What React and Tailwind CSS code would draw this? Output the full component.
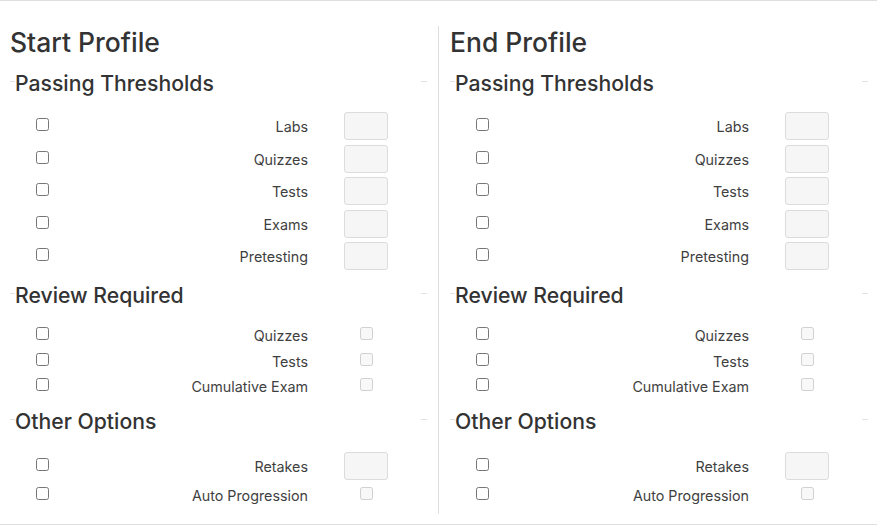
import React from "react";

const sections = [
  {
    title: "Passing Thresholds",
    mt: "mt-[10px]",
    pad: "pt-[14px]",
    gap: "gap-[4.5px]",
    rows: [
      { label: "Labs", kind: "input" },
      { label: "Quizzes", kind: "input" },
      { label: "Tests", kind: "input" },
      { label: "Exams", kind: "input" },
      { label: "Pretesting", kind: "input" },
    ],
  },
  {
    title: "Review Required",
    mt: "mt-[10px]",
    pad: "pt-[11px]",
    gap: "gap-0",
    rows: [
      { label: "Quizzes", kind: "check" },
      { label: "Tests", kind: "check" },
      { label: "Cumulative Exam", kind: "check" },
    ],
  },
  {
    title: "Other Options",
    mt: "mt-[8px]",
    pad: "pt-[16px]",
    gap: "gap-[1px]",
    rows: [
      { label: "Retakes", kind: "input" },
      { label: "Auto Progression", kind: "check" },
    ],
  },
];

function SectionHeader({ title }) {
  return (
    <div className="flex items-start h-[30px]">
      <span className="w-[5px] h-px bg-[#e2e2e2] mt-[13px]" />
      <span className="flex-1 text-[21.2px] font-medium leading-[30px] text-[#333]">{title}</span>
      <span className="w-[6px] h-px bg-[#e2e2e2] mt-[13px]" />
    </div>
  );
}

function Row({ row }) {
  const tall = row.kind === "input";
  return (
    <div className={`flex items-start pl-[26px] pr-[39px] ${tall ? "h-[28px]" : "h-[25.5px]"}`}>
      <input type="checkbox" className="w-[13px] h-[13px] mt-[6px] shrink-0" />
      <span className="flex-1 text-right text-[14.3px] leading-[20px] mt-[5px] text-[#3f3f3f]">
        {row.label}
      </span>
      <div className="w-[44px] ml-[36px] flex justify-center">
        {tall ? (
          <input
            type="text"
            className="w-[44px] h-[28px] bg-[#f6f6f6] border border-[#dcdcdc] rounded-[3px] outline-none"
          />
        ) : (
          <input type="checkbox" disabled className="w-[13px] h-[13px] mt-[6px]" />
        )}
      </div>
    </div>
  );
}

function Profile({ title }) {
  return (
    <div className="flex flex-col pb-[8px]">
      <h2 className="text-[26.5px] font-medium leading-[32px] text-[#333]">{title}</h2>
      {sections.map((s) => (
        <div key={s.title} className={s.mt}>
          <SectionHeader title={s.title} />
          <div className={`flex flex-col ${s.pad} ${s.gap}`}>
            {s.rows.map((r) => (
              <Row key={r.label} row={r} />
            ))}
          </div>
        </div>
      ))}
    </div>
  );
}

export default function App() {
  return (
    <main
      className="w-[877px] bg-white border-y border-[#dedede] pt-[25px] pb-[10px]"
      style={{ fontFamily: "Inter, 'Noto Sans', sans-serif" }}
    >
      <div className="grid grid-cols-[438px_1fr]">
        <div className="pl-[10px] pr-[11px]">
          <Profile title="Start Profile" />
        </div>
        <div className="border-l border-[#dedede] pl-[11px] pr-[9px]">
          <Profile title="End Profile" />
        </div>
      </div>
    </main>
  );
}
